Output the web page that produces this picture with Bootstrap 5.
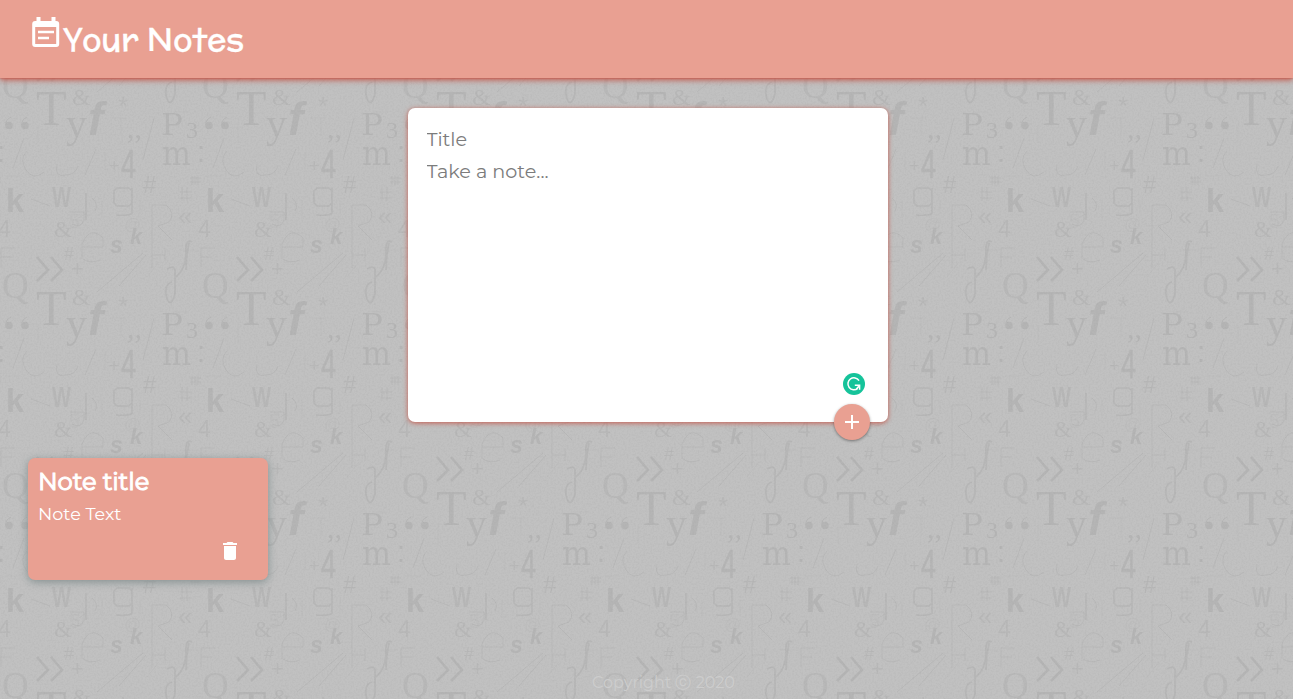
<!DOCTYPE html>
<html lang="en">
<head>
<meta charset="utf-8">
<title>Your Notes</title>
<link rel="stylesheet" href="https://cdn.jsdelivr.net/npm/bootstrap@5.3.0/dist/css/bootstrap.min.css">
<style>
body{font-family:Montserrat,Inter,"Noto Sans",sans-serif;background:#bdbdbd;height:100vh;overflow:hidden}
.wallpaper{position:absolute;inset:0;width:100%;height:100%;z-index:-1}
.site-head{height:78px;padding:0 32px;background:#e9a092;box-shadow:0 2px 6px #c4594c,0 0 2px #bd4f42}
.brand-icon{width:28px;height:31px;margin-top:-14px}
.brand-title{font-family:McLaren,"Noto Sans",sans-serif;font-size:32px;font-weight:400;line-height:1;margin:0 0 0 3px;-webkit-text-stroke:.3px #fff}
.composer{width:480px;height:314px;margin:30px auto 0;left:1px;padding:15px 18px 16px 19px;border-radius:7px;background:#fff;box-shadow:0 1px 5px #c65b4e}
.composer input,.composer textarea{border:0;outline:0;padding:0;resize:none;background:none;font-size:19.2px;line-height:32px;height:32px;color:#333}
.composer ::placeholder{color:#7c7c7c;opacity:1}
.composer textarea{height:150px}
.helper-dot{position:absolute;right:23px;bottom:27px;width:22px;height:22px}
.add-btn{position:absolute;right:18px;bottom:-18px;width:36px;height:36px;background:#e9a092;box-shadow:0 1px 3px rgba(0,0,0,.4)}
.note-item{width:240px;height:122px;margin:36px 0 0 28px;padding:9px 10px 10px;border-radius:7px;background:#e9a092;box-shadow:0 2px 8px #849090}
.note-item h1{font-size:24.2px;line-height:30px;font-weight:400;-webkit-text-stroke:1px #fff;letter-spacing:-.1px;margin:0 0 7px;white-space:nowrap}
.note-item p{font-size:17.6px;line-height:20px;margin:0}
.note-item .trash{margin:15px 16px 0 0}
.site-foot{color:#cdcdcd;font-size:16px;line-height:24px;padding:0 0 4px 34px}
</style>
<script src="https://cdn.jsdelivr.net/npm/bootstrap@5.3.0/dist/js/bootstrap.bundle.min.js"></script>
</head>
<body class="d-flex flex-column position-relative">
<svg class="wallpaper" aria-hidden="true">
<defs>
<filter id="grain" x="0" y="0" width="100%" height="100%"><feTurbulence type="fractalNoise" baseFrequency=".55" numOctaves="2" seed="4"/><feColorMatrix values="0 0 0 0 .3  0 0 0 0 .3  0 0 0 0 .3  .9 0 0 0 -.36"/></filter>
<g id="glyphs">
<g font-family="Liberation Serif">
<text x="2" y="98" font-size="37" opacity=".75">Q</text><text x="36" y="125" font-size="50">T</text><text x="72" y="105" font-size="24" opacity=".8">&amp;</text><text x="66" y="137" font-size="42">y</text>
<text x="186" y="138" font-size="24">3</text><text x="127" y="138" font-size="30">,,</text>
<text x="54" y="37" font-size="23" opacity=".8">&amp;</text>
</g>
<g><circle cx="9" cy="125.500" r="3.800"/><circle cx="25" cy="125.500" r="3.800"/><path d="M6 125q-1-5 5-8M22 125q-1-5 5-8" fill="none" stroke="#888"/><circle cx="-7" cy="125.500" r="0"/></g>
<g font-family="DejaVu Serif" opacity=".9">
<text x="161" y="135" font-size="30" textLength="22" lengthAdjust="spacingAndGlyphs">P</text><text x="162" y="165" font-size="34" textLength="29" lengthAdjust="spacingAndGlyphs">m</text>
</g>
<g font-family="Liberation Sans">
<text x="71" y="76" font-size="22" opacity=".7">+</text>
<text x="88" y="135" font-size="46" font-weight="bold" font-style="italic">f</text><text x="118" y="115" font-size="26" opacity=".7">*</text>
<text x="-3" y="162" font-size="29">:</text><text x="109" y="172" font-size="18" opacity=".7">+</text>
<text x="121" y="178" font-size="41" textLength="15" lengthAdjust="spacingAndGlyphs" stroke="#888" stroke-width=".6">4</text>
<text x="143" y="193" font-size="24" opacity=".8">#</text><text x="6" y="212" font-size="34" font-weight="bold" textLength="18" lengthAdjust="spacingAndGlyphs">k</text>
<text x="52" y="207" font-size="30" font-weight="bold" textLength="19" lengthAdjust="spacingAndGlyphs" opacity=".8">W</text>
<text x="178" y="25" font-size="26" opacity=".7">«</text><text x="198" y="37" font-size="23" opacity=".7">4</text>
<text x="64" y="60" font-size="18" opacity=".7">#</text><text x="110" y="53" font-size="23" font-weight="bold" font-style="italic">s</text><text x="130" y="44" font-size="22" font-weight="bold" font-style="italic">k</text>
<text x="124" y="30" font-size="17" opacity=".35">@</text><text x="69" y="28" font-size="20" opacity=".35">5</text>
</g>
<g fill="none" stroke="#888">
<path d="M37 57l11 13-11 11M51 57l11 13-11 11" stroke-width="2.6"/>
<path d="M192 42q-7-4-6 12-1 16-10 23M189 43q-3 13-3 27M167 69q9-5 8 4v21q-4 14-8 5-4-14 5-17" stroke-width="1.8" opacity=".8"/>
<path d="M117 188h12l3 3v12l-3 3h-12l-3-3v-12zM132 188v25q-2 3-16 2M86 193v27" stroke-width="1.7" opacity=".8"/>
<path d="M97 92l46-39M119 86l27-31M143 160l11-42M13 168l11-30M85 175l11-26M152 68V5h14q10 8 3 17l-11 4 14 14M165 48v13M152 55h13M201 67V48h14M201 57h11M82 59V44Q90 25 103 38v9H82M83 59q7 5 17 1M57 164q-3 14 9 11 9 0 12-9M27 151q-8 8-1 19t18 2M92 198q7 6 3 13M192 176v9M195 176v9M198 176v9M190 178h11M190 182h11M182 187v14M187 187v14M180 192h12M180 198h12M31 199l19 7M70 12h14v8q-3 9-12 4" opacity=".75"/>
<path d="M5 176h16M105 152v18M38 125v18M75 20l12-7M147 77l12-15M173 112h15M102 0v18M110 118h16M121 118v18M140 0v14M180 50h18" opacity=".35"/>
</g>
</g>
<pattern id="letters" width="200" height="200" patternUnits="userSpaceOnUse"><g fill="#888" opacity=".22"><use href="#glyphs"/><use href="#glyphs" x="200"/><use href="#glyphs" x="-200"/><use href="#glyphs" y="-200"/><use href="#glyphs" y="200"/></g></pattern>
</defs>
<rect width="100%" height="100%" fill="#c1c1c1"/><rect width="100%" height="100%" fill="url(#letters)"/><rect width="100%" height="100%" filter="url(#grain)" opacity=".35"/>
</svg>
<header class="site-head d-flex align-items-center text-white flex-shrink-0">
<svg class="brand-icon" viewBox="0 0 28 31" fill="none" stroke="#fff" stroke-width="3"><rect x="1.7" y="5.5" width="24" height="23" rx="1.500"/><path d="M1 8h26M6.500 0v6M21.500 0v6" stroke-width="4"/><path d="M6 15h16M6 21h11" stroke-width="2.700"/></svg>
<div class="brand-title">Your Notes</div>
</header>
<main class="flex-grow-1">
<form class="composer position-relative">
<input class="d-block w-100" placeholder="Title" aria-label="Title">
<textarea class="d-block w-100" placeholder="Take a note..." aria-label="Note"></textarea>
<svg class="helper-dot" viewBox="0 0 22 22"><circle cx="11" cy="11" r="11" fill="#15c39a"/><path d="M16 7.600A6 6 0 1 0 14.800 15.400M11.800 12.300h4.800v4.400M16.400 12.600l-3 3.400" fill="none" stroke="#fff" stroke-width="1.500"/></svg>
<button type="button" class="add-btn btn rounded-circle border-0 p-0 d-flex align-items-center justify-content-center" aria-label="Add"><svg width="24" height="24" fill="#fff"><path d="M19 13h-6v6h-2v-6H5v-2h6V5h2v6h6v2z"/></svg></button>
</form>
<article class="note-item text-white">
<h1>Note title</h1><p>Note Text</p>
<svg class="trash d-block ms-auto" width="24" height="24" fill="#fff"><path d="M6 19c0 1.100.9 2 2 2h8c1.100 0 2-.9 2-2V7H6v12zM19 4h-3.500l-1-1h-5l-1 1H5v2h14V4z"/></svg>
</article>
</main>
<footer class="site-foot text-center">Copyright ⓒ 2020</footer>
</body>
</html>
